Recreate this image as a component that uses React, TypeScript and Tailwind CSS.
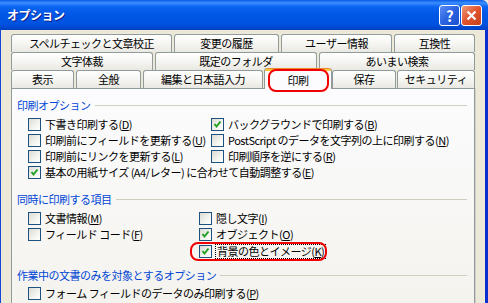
import React from 'react';

type Opt = { label: string; k: string; checked?: boolean; span?: boolean };

const printOpts: Opt[] = [
  { label: '下書き印刷する', k: 'D' },
  { label: 'バックグラウンドで印刷する', k: 'B', checked: true },
  { label: '印刷前にフィールドを更新する', k: 'U' },
  { label: 'PostScript のデータを文字列の上に印刷する', k: 'N' },
  { label: '印刷前にリンクを更新する', k: 'L' },
  { label: '印刷順序を逆にする', k: 'R' },
  { label: '基本の用紙サイズ (A4/レター) に合わせて自動調整する', k: 'E', checked: true, span: true },
];

function Box({ checked }: { checked?: boolean }) {
  return (
    <span className="flex h-[13px] w-[13px] shrink-0 items-center justify-center border border-[#1c5180] bg-[linear-gradient(135deg,#dcdcd5,#f4f4f0_60%,#ffffff)]">
      {checked && (
        <svg width="9" height="9" viewBox="0 0 9 9">
          <path d="M1.5 4 L3.5 6.5 L7.5 1.5" stroke="#21a121" strokeWidth="2" fill="none" />
        </svg>
      )}
    </span>
  );
}

function Item({ label, k, checked, focus }: Opt & { focus?: boolean }) {
  return (
    <div className="flex h-[16px] items-center gap-[3px] whitespace-pre">
      <Box checked={checked} />
      <span className={focus ? 'border border-dotted border-black px-[1px] leading-[13px]' : 'px-[1px]'}>
        {label}(<u>{k}</u>)
      </span>
    </div>
  );
}

function Heading({ text }: { text: string }) {
  return (
    <div className="flex h-[14px] items-center gap-[4px]">
      <span className="text-[#0046d5]">{text}</span>
      <div className="h-px flex-1 bg-[#d0d0bf]" />
    </div>
  );
}

function Tab({ text, w, className = '' }: { text: string; w: string; className?: string }) {
  return (
    <div
      className={`flex h-[18px] shrink-0 items-center justify-center rounded-t-[3px] border border-b-0 border-[#919b9c] bg-[linear-gradient(to_bottom,#ffffff,#f3f3ef_60%,#e9e8e2)] ${w} ${className}`}
    >
      {text}
    </div>
  );
}

export default function App() {
  return (
    <div className="flex h-[303px] w-[488px] flex-col overflow-hidden bg-[#ece9d8] font-['Noto_Sans_CJK_JP',sans-serif] text-[11px] tracking-[-0.5px] text-black">
      {/* title bar */}
      <div className="flex h-[30px] shrink-0 items-center rounded-tr-[6px] bg-[linear-gradient(to_bottom,#0a5ae8_0%,#3d8fff_10%,#0b63f2_22%,#0057e5_50%,#0053e0_80%,#0040c4_100%)] pl-[7px] pr-[6px]">
        <span className="text-[12px] font-bold text-white [text-shadow:1px_1px_0_#0a1e8c]">オプション</span>
        <div className="ml-auto flex gap-[1px]">
          <div className="flex h-[21px] w-[21px] items-center justify-center rounded-[3px] border border-white bg-[linear-gradient(135deg,#5b8df5,#2a63e0_50%,#1d4fcf)] text-[15px] font-bold leading-none text-white">
            ?
          </div>
          <div className="flex h-[21px] w-[21px] items-center justify-center rounded-[3px] border border-white bg-[linear-gradient(135deg,#f09a7a,#e0532c_50%,#c7401c)]">
            <svg width="11" height="11" viewBox="0 0 11 11">
              <path d="M1.5 1.5 L9.5 9.5 M9.5 1.5 L1.5 9.5" stroke="#fff" strokeWidth="2.2" />
            </svg>
          </div>
        </div>
      </div>

      {/* body */}
      <div className="flex flex-1">
        <div className="w-px bg-[#1648d8]" />
        <div className="flex flex-1 flex-col pl-[10px] pr-[10px] pt-[4px]">
          {/* tabs */}
          <div className="flex gap-[2px]">
            <Tab text="スペルチェックと文章校正" w="w-[161px]" />
            <Tab text="変更の履歴" w="w-[105px]" />
            <Tab text="ユーザー情報" w="w-[111px]" />
            <Tab text="互換性" w="w-[81px]" />
          </div>
          <div className="flex gap-[2px]">
            <Tab text="文字体裁" w="w-[142px]" />
            <Tab text="既定のフォルダ" w="w-[162px]" />
            <Tab text="あいまい検索" w="w-[156px]" />
          </div>
          <div className="flex h-[18px] items-start">
            <Tab text="表示" w="w-[63px]" />
            <Tab text="全般" w="w-[65px]" className="ml-[2px]" />
            <Tab text="編集と日本語入力" w="w-[120px]" className="ml-[2px]" />
            <div className="relative z-10 -mt-[2px] ml-[1px] flex h-[21px] w-[68px] shrink-0 flex-col rounded-t-[3px] border-x border-[#919b9c] bg-[#fcfcfe]">
              <div className="h-[3px] rounded-t-[3px] border-t border-[#e68b2c] bg-[#ffc73c]" />
              <div className="flex flex-1 items-center justify-center">印刷</div>
              <div className="absolute left-[3px] top-[1px] h-[23px] w-[61px] rounded-[8px] border-[2px] border-[#f00000]" />
            </div>
            <Tab text="保存" w="w-[64px]" />
            <Tab text="セキュリティ" w="w-[78px]" className="ml-[1px]" />
          </div>

          {/* panel */}
          <div className="flex flex-1 flex-col border border-b-0 border-[#919b9c] bg-[linear-gradient(to_bottom,#fcfcfe,#f4f3ee)] pl-[5px] pr-[7px] pt-[9px] shadow-[1px_0_0_#d0d0c8]">
            <Heading text="印刷オプション" />
            <div className="ml-[11px] mt-[4px] grid grid-cols-[183px_1fr]">
              {printOpts.map((o) => (
                <div key={o.k} className={o.span ? 'col-span-2' : ''}>
                  <Item {...o} />
                </div>
              ))}
            </div>

            <div className="mt-[12px]">
              <Heading text="同時に印刷する項目" />
            </div>
            <div className="ml-[11px] mt-[4px] grid grid-cols-[171px_1fr]">
              <Item label="文書情報" k="M" />
              <Item label="隠し文字" k="I" />
              <Item label="フィールド コード" k="F" />
              <Item label="オブジェクト" k="O" checked />
              <div />
              <div className="relative mt-[1px]">
                <Item label="背景の色とイメージ" k="K" checked focus />
                <div className="absolute -left-[9px] -top-[1px] h-[19px] w-[137px] rounded-[8px] border-[2px] border-[#f00000]" />
              </div>
            </div>

            <div className="mt-[9px]">
              <Heading text="作業中の文書のみを対象とするオプション" />
            </div>
            <div className="ml-[11px] mt-[3px]">
              <Item label="フォーム フィールドのデータのみ印刷する" k="P" />
            </div>
          </div>
        </div>
        <div className="w-[3px] bg-[#0a2fcf]" />
      </div>
    </div>
  );
}
